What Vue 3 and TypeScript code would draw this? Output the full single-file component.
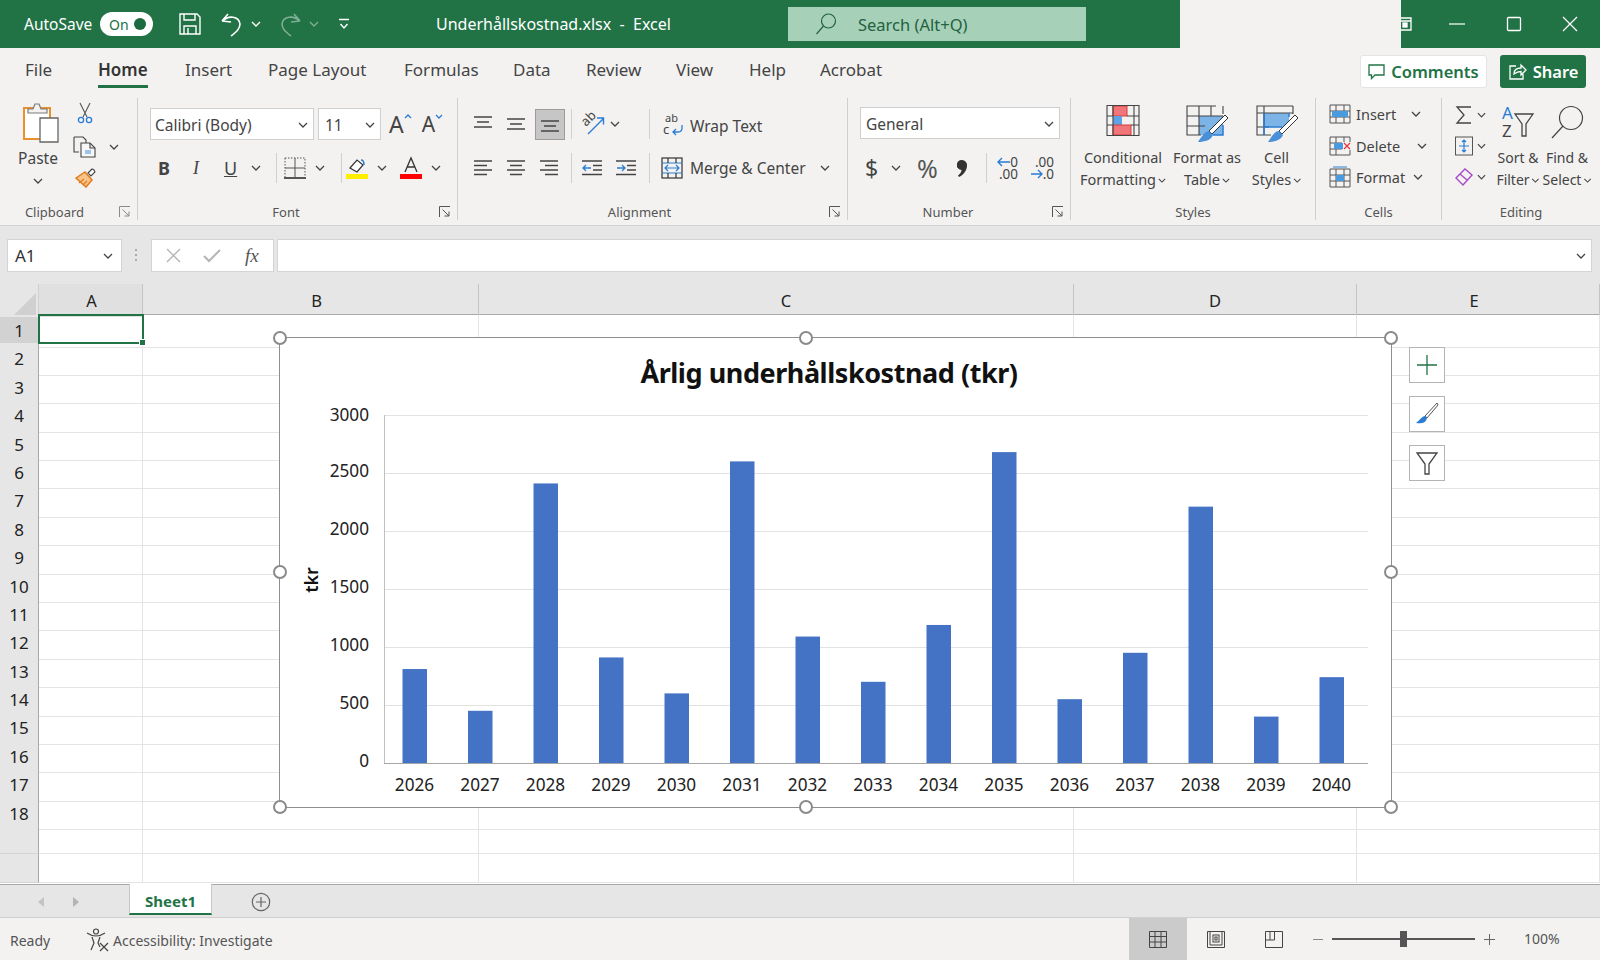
<script setup lang="ts">
const tabs = ['File', 'Home', 'Insert', 'Page Layout', 'Formulas', 'Data', 'Review', 'View', 'Help', 'Acrobat']
const columns = ['A', 'B', 'C', 'D', 'E']
const rows = Array.from({ length: 20 }, (_, i) => i + 1)

const values = [810, 450, 2410, 910, 600, 2600, 1090, 700, 1190, 2680, 550, 950, 2210, 400, 740]
const ticks = [3000, 2500, 2000, 1500, 1000, 500, 0]

const plotBottom = 425
const pxPerUnit = 348 / 3000
const yFor = (v: number) => plotBottom - v * pxPerUnit
const xFor = (i: number) => 134.5 + i * 65.5

const handles = ['h-tl', 'h-tm', 'h-tr', 'h-ml', 'h-mr', 'h-bl', 'h-bm', 'h-br']
</script>

<template>
  <div class="app">
    <!-- title bar -->
    <header class="titlebar">
      <span class="autosave">AutoSave</span>
      <span class="toggle"><span>On</span><i></i></span>
      <svg class="tb-save" width="24" height="24" viewBox="0 0 24 24" fill="none" stroke="#fff" stroke-width="1.4">
        <path d="M2 2h17l3 3v17H2z" /><path d="M6 2v6h11V2M6 22v-8h12v8M10 16v6" />
      </svg>
      <svg class="tb-undo" width="24" height="26" viewBox="0 0 24 26" fill="none" stroke="#fff" stroke-width="1.6">
        <path d="M2 10l6-7M2 10l9 1M3 10c5-6 16-5 17 3 0 5-4 8-9 12" />
      </svg>
      <svg class="chev-w c1" width="10" height="6" viewBox="0 0 10 6" fill="none" stroke="#fff" stroke-width="1.4"><path d="M1 1l4 4 4-4" /></svg>
      <svg class="tb-redo" width="24" height="26" viewBox="0 0 24 26" fill="none" stroke="#7fae94" stroke-width="1.6">
        <path d="M22 10l-6-7M22 10l-9 1M21 10c-5-6-16-5-17 3 0 5 4 8 9 12" />
      </svg>
      <svg class="chev-w c2" width="10" height="6" viewBox="0 0 10 6" fill="none" stroke="#7fae94" stroke-width="1.4"><path d="M1 1l4 4 4-4" /></svg>
      <svg class="tb-more" width="12" height="12" viewBox="0 0 12 12" fill="none" stroke="#fff" stroke-width="1.4"><path d="M1 1.5h10M2.5 6l3.5 4 3.5-4" /></svg>
      <span class="doc-title">Underhållskostnad.xlsx&nbsp; -&nbsp; Excel</span>
      <div class="search">
        <svg width="24" height="24" viewBox="0 0 24 24" fill="none" stroke="#24613f" stroke-width="1.2"><circle cx="14.5" cy="9" r="7" /><path d="M9.5 14L2.5 22" /></svg>
        <span>Search (Alt+Q)</span>
      </div>
      <div class="win-btns">
        <svg width="12" height="14" viewBox="0 0 12 14" fill="none" stroke="#fff" stroke-width="1.3" class="win-restore"><path d="M0 1h11v12H0M0 4h11" /><rect x="3" y="6" width="4" height="4" fill="#fff" /></svg>
        <svg width="16" height="16" viewBox="0 0 16 16" stroke="#fff" stroke-width="1.2"><path d="M0 8h16" /></svg>
        <svg width="16" height="16" viewBox="0 0 16 16" fill="none" stroke="#fff" stroke-width="1.3"><rect x="1.5" y="1.5" width="13" height="13" rx="1" /></svg>
        <svg width="16" height="16" viewBox="0 0 16 16" stroke="#fff" stroke-width="1.3"><path d="M1 1l14 14M15 1L1 15" /></svg>
      </div>
    </header>
    <div class="title-patch"></div>

    <!-- ribbon -->
    <section class="ribbon">
      <div class="tabs">
        <span v-for="t in tabs" :key="t" class="tab" :class="[{ active: t === 'Home' }, 'tab-' + t.split(' ')[0].toLowerCase()]">{{ t }}</span>
        <div class="tab-actions">
          <button class="comments">
            <svg width="17" height="17" viewBox="0 0 17 17" fill="none" stroke="#217346" stroke-width="1.3"><path d="M1 2h15v10H7l-3.5 3.5V12H1z" /></svg>
            Comments
          </button>
          <button class="share">
            <svg width="19" height="19" viewBox="0 0 19 19" fill="none" stroke="#fff" stroke-width="1.3"><path d="M8 4H2v13h13v-5M6 12c0-4 3-6 7-6V3l5 5-5 5V9.5c-3 0-5 1-7 2.5z" /></svg>
            Share
          </button>
        </div>
      </div>

      <div class="groups">
        <!-- Clipboard -->
        <div class="group g-clip">
          <div class="body">
            <div class="paste">
              <svg width="36" height="40" viewBox="0 0 36 40" fill="none">
                <path d="M17 36H1V5h26v10" fill="#fff" stroke="#e8912d" stroke-width="2" />
                <path d="M5 10V6h5l2-5h4l2 5h6v4z" fill="#f3f2f1" stroke="#7a7a7a" stroke-width="1.2" />
                <path d="M17 15h18v24H17z" fill="#fff" stroke="#666" stroke-width="1.3" />
              </svg>
              <span>Paste</span>
              <svg class="chev" width="10" height="6" viewBox="0 0 10 6"><path d="M1 1l4 4 4-4" /></svg>
            </div>
            <div class="clip-tools">
              <svg class="t-cut" width="16" height="22" viewBox="0 0 16 22" fill="none" stroke="#555" stroke-width="1.1">
                <path d="M3 1l7 14M13 1L6 15" /><circle cx="4" cy="18" r="2.6" stroke="#2b7cd3" stroke-width="1.3" /><circle cx="12" cy="18" r="2.6" stroke="#2b7cd3" stroke-width="1.3" />
              </svg>
              <div class="copy-row">
                <svg width="24" height="22" viewBox="0 0 24 22" fill="none" stroke="#444" stroke-width="1.1">
                  <path d="M1 1h9l3 3v3M1 1v15h5" /><path d="M8 7h9l5 5v9H8z" fill="#f7f7f7" /><path d="M17 7v5h5" /><rect x="12" y="14" width="6" height="4" fill="#9cc3e8" stroke="none" />
                </svg>
                <svg class="chev" width="10" height="6" viewBox="0 0 10 6"><path d="M1 1l4 4 4-4" /></svg>
              </div>
              <svg class="t-paint" width="24" height="22" viewBox="0 0 24 22" fill="none">
                <path d="M2 12l9-6 7 8-6 7z" fill="#f8c489" stroke="#e07b1f" stroke-width="1.5" />
                <path d="M14 7l4-4 2 1 1 2-4 4z" fill="#fff" stroke="#444" stroke-width="1.1" />
                <path d="M5 17l5-4M9 19l4-4" stroke="#e07b1f" stroke-width="1.2" />
              </svg>
            </div>
          </div>
          <div class="label">Clipboard
            <svg class="launch" width="12" height="12" viewBox="0 0 12 12" fill="none" stroke="#8a8a8a"><path d="M.5 11V.5H11M3.5 3.5L10 10M10 5.5V10H5.5" /></svg>
          </div>
        </div>

        <!-- Font -->
        <div class="group g-font">
          <div class="body col">
            <div class="rb-row">
              <div class="select s-font">Calibri (Body)<svg class="chev" width="10" height="6" viewBox="0 0 10 6"><path d="M1 1l4 4 4-4" /></svg></div>
              <div class="select s-size">11<svg class="chev" width="10" height="6" viewBox="0 0 10 6"><path d="M1 1l4 4 4-4" /></svg></div>
              <span class="big-a grow">A<svg width="8" height="5" viewBox="0 0 8 5" fill="none" stroke="#2b7cd3" stroke-width="1.3"><path d="M1 4l3-3 3 3" /></svg></span>
              <span class="big-a shrink">A<svg width="8" height="5" viewBox="0 0 8 5" fill="none" stroke="#2b7cd3" stroke-width="1.3"><path d="M1 1l3 3 3-3" /></svg></span>
            </div>
            <div class="rb-row r-fmt">
              <b class="f-b">B</b>
              <i class="f-i">I</i>
              <u class="f-u">U</u>
              <svg class="chev f-c1" width="10" height="6" viewBox="0 0 10 6"><path d="M1 1l4 4 4-4" /></svg>
              <span class="vsep vs1"></span>
              <svg class="f-border" width="22" height="22" viewBox="0 0 22 22" fill="none" stroke="#555"><path d="M1 1h20v19M1 1v19" stroke-dasharray="1.5 1.5" /><path d="M11 1v19M1 11h20" stroke="#555" /><path d="M0 21h22" stroke="#222" stroke-width="1.5" /></svg>
              <svg class="chev f-c2" width="10" height="6" viewBox="0 0 10 6"><path d="M1 1l4 4 4-4" /></svg>
              <span class="vsep vs2"></span>
              <svg class="f-fill" width="24" height="24" viewBox="0 0 24 24" fill="none">
                <path d="M5 12l7-8 6 5-6 7z" fill="#fff" stroke="#333" stroke-width="1.2" />
                <path d="M16 4c2 0 3 2 3 5" stroke="#2b7cd3" stroke-width="1.5" />
                <rect x="1" y="18" width="22" height="5" fill="#ffee00" />
              </svg>
              <svg class="chev f-c3" width="10" height="6" viewBox="0 0 10 6"><path d="M1 1l4 4 4-4" /></svg>
              <svg class="f-color" width="24" height="24" viewBox="0 0 24 24" fill="none">
                <path d="M6 16L12 2l6 14M8 11h8" stroke="#333" stroke-width="1.3" />
                <rect x="1" y="18" width="22" height="5" fill="#f00" />
              </svg>
              <svg class="chev f-c4" width="10" height="6" viewBox="0 0 10 6"><path d="M1 1l4 4 4-4" /></svg>
            </div>
          </div>
          <div class="label">Font
            <svg class="launch" width="12" height="12" viewBox="0 0 12 12" fill="none" stroke="#555"><path d="M.5 11V.5H11M3.5 3.5L10 10M10 5.5V10H5.5" /></svg>
          </div>
        </div>

        <!-- Alignment -->
        <div class="group g-align">
          <div class="body col">
            <div class="rb-row r-al1">
              <svg class="a1-1" width="20" height="18" viewBox="0 0 20 18" stroke="#444" stroke-width="1.3"><path d="M1 2h18M4 7h12M1 12h18" /></svg>
              <svg class="a1-2" width="20" height="18" viewBox="0 0 20 18" stroke="#444" stroke-width="1.3"><path d="M1 4h18M4 9h12M1 14h18" /></svg>
              <span class="al-on"><svg width="20" height="18" viewBox="0 0 20 18" stroke="#444" stroke-width="1.3"><path d="M1 6h18M4 11h12M1 16h18" /></svg></span>
              <span class="vsep a1-s1"></span>
              <svg class="orient ic-open" width="22" height="24" viewBox="0 0 22 24" fill="none">
                <text transform="translate(3 15) rotate(-45)" class="ic-text">ab</text>
                <path d="M5 22L20 7M14 6h6.500v6.500" stroke="#2b7cd3" stroke-width="1.4" />
              </svg>
              <svg class="chev a1-c" width="10" height="6" viewBox="0 0 10 6"><path d="M1 1l4 4 4-4" /></svg>
              <span class="vsep a1-s2"></span>
              <svg class="wrap-ic ic-open" width="22" height="24" viewBox="0 0 22 24" fill="none">
                <text x="3" y="10" class="ic-text small">ab</text>
                <text x="1" y="22" class="ic-text">c</text>
                <path d="M20 13v3c0 3-2 4-4 4h-5M14 17l-3 3 3 3" stroke="#2b7cd3" stroke-width="1.3" />
              </svg>
              <span class="al-text t-wrap">Wrap Text</span>
            </div>
            <div class="rb-row r-al2">
              <svg class="a2-1" width="20" height="18" viewBox="0 0 20 18" stroke="#444" stroke-width="1.3"><path d="M1 2h18M1 6.5h13M1 11h18M1 15.5h13" /></svg>
              <svg class="a2-2" width="20" height="18" viewBox="0 0 20 18" stroke="#444" stroke-width="1.3"><path d="M1 2h18M4 6.5h12M1 11h18M4 15.5h12" /></svg>
              <svg class="a2-2" width="20" height="18" viewBox="0 0 20 18" stroke="#444" stroke-width="1.3"><path d="M1 2h18M6 6.5h13M1 11h18M6 15.5h13" /></svg>
              <span class="vsep a2-s1"></span>
              <svg class="a2-i1" width="20" height="18" viewBox="0 0 20 18" fill="none" stroke="#444" stroke-width="1.3"><path d="M0 2h20M11 6.5h9M11 11h9M0 15.5h20" /><path d="M1 9h8M4 6L1 9l3 3" stroke="#2b7cd3" /></svg>
              <svg class="a2-i2" width="20" height="18" viewBox="0 0 20 18" fill="none" stroke="#444" stroke-width="1.3"><path d="M0 2h20M11 6.5h9M11 11h9M0 15.5h20" /><path d="M1 9h8M6 6l3 3-3 3" stroke="#2b7cd3" /></svg>
              <span class="vsep a2-s2"></span>
              <svg class="merge-ic" width="22" height="22" viewBox="0 0 22 22" fill="none" stroke-width="1.2">
                <rect x="1" y="1" width="20" height="20" stroke="#333" />
                <path d="M1 6h20M1 16h20" stroke="#2b7cd3" />
                <path d="M7 1v5M15 1v5M7 16v5M15 16v5" stroke="#333" />
                <path d="M4 11h14M7 8l-3 3 3 3M15 8l3 3-3 3" stroke="#2b7cd3" />
              </svg>
              <span class="al-text t-merge">Merge &amp; Center</span>
              <svg class="chev m-chev" width="10" height="6" viewBox="0 0 10 6"><path d="M1 1l4 4 4-4" /></svg>
            </div>
          </div>
          <div class="label">Alignment
            <svg class="launch" width="12" height="12" viewBox="0 0 12 12" fill="none" stroke="#555"><path d="M.5 11V.5H11M3.5 3.5L10 10M10 5.5V10H5.5" /></svg>
          </div>
        </div>

        <!-- Number -->
        <div class="group g-num">
          <div class="body col">
            <div class="rb-row"><div class="select s-num">General<svg class="chev" width="10" height="6" viewBox="0 0 10 6"><path d="M1 1l4 4 4-4" /></svg></div></div>
            <div class="rb-row r-num">
              <span class="n-d">$</span>
              <svg class="chev n-c" width="10" height="6" viewBox="0 0 10 6"><path d="M1 1l4 4 4-4" /></svg>
              <span class="n-p">%</span>
              <svg class="n-k" width="10" height="17" viewBox="0 0 10 17" fill="#333"><path d="M5 0a5 5 0 0 1 5 5.5C10 11 6 15 2 17l-1-1.5c2-1.500 3.500-3.500 3.500-5.500A5 5 0 0 1 5 0z" /></svg>
              <span class="vsep n-s"></span>
              <div class="dec d-less">
                <div><svg width="13" height="10" viewBox="0 0 13 10" fill="none" stroke="#2b7cd3" stroke-width="1.4"><path d="M13 5H1M5 1L1 5l4 4" /></svg><span>0</span></div>
                <div><span>.00</span></div>
              </div>
              <div class="dec d-more">
                <div><span>.00</span></div>
                <div><svg width="12" height="10" viewBox="0 0 12 10" fill="none" stroke="#2b7cd3" stroke-width="1.4"><path d="M0 5h11M7 1l4 4-4 4" /></svg><span>.0</span></div>
              </div>
            </div>
          </div>
          <div class="label">Number
            <svg class="launch" width="12" height="12" viewBox="0 0 12 12" fill="none" stroke="#555"><path d="M.5 11V.5H11M3.5 3.5L10 10M10 5.5V10H5.5" /></svg>
          </div>
        </div>

        <!-- Styles -->
        <div class="group g-styles">
          <div class="body styles">
            <div class="big b-cond">
              <svg width="34" height="31" viewBox="0 0 34 31" fill="none">
                <rect x="7" y="1" width="14" height="10" fill="#f0767a" stroke="#d83b3b" />
                <rect x="7" y="11" width="9" height="9" fill="#5ea4e4" />
                <rect x="7" y="20" width="18" height="10" fill="#f0767a" stroke="#d83b3b" />
                <path d="M1 .5h32v30H1zM1 11h6M21 11h12M1 20h6M25 20h8M7 .5v30M28 .5v30" stroke="#444" stroke-width="1.1" />
              </svg>
              <span>Conditional<br />Formatting<svg class="chev" width="8" height="5" viewBox="0 0 10 6"><path d="M1 1l4 4 4-4" /></svg></span>
            </div>
            <div class="big b-table">
              <svg width="42" height="38" viewBox="0 0 42 38" fill="none">
                <rect x="13" y="11" width="24" height="19" fill="#7db4e8" />
                <path d="M27 30h10V20" stroke="#2b7cd3" stroke-width="1.5" />
                <path d="M30 1H1v29h14M1 11h36M1 21h18M13 1v29M25 1v10M37 1v8" stroke="#444" stroke-width="1.1" />
                <path d="M39 10L23 26l3 3L42 13z" fill="#fff" stroke="#333" />
                <path d="M23 26c-4 0-7 5-11 11 7 0 13-2 15-7z" fill="#4a90d9" />
              </svg>
              <span>Format as<br />Table<svg class="chev" width="8" height="5" viewBox="0 0 10 6"><path d="M1 1l4 4 4-4" /></svg></span>
            </div>
            <div class="big b-cell">
              <svg width="42" height="38" viewBox="0 0 42 38" fill="none">
                <rect x="8" y="8" width="25" height="14" fill="#7db4e8" />
                <path d="M37 1H1v29h14M1 8h36M1 22h12M8 1v29M37 1v8" stroke="#444" stroke-width="1.1" />
                <path d="M8 8v22M8 22h18M33 8v4" stroke="#2b7cd3" stroke-width="1.5" />
                <path d="M39 10L23 26l3 3L42 13z" fill="#fff" stroke="#333" />
                <path d="M23 26c-4 0-7 5-11 11 7 0 13-2 15-7z" fill="#4a90d9" />
              </svg>
              <span>Cell<br />Styles<svg class="chev" width="8" height="5" viewBox="0 0 10 6"><path d="M1 1l4 4 4-4" /></svg></span>
            </div>
          </div>
          <div class="label">Styles</div>
        </div>

        <!-- Cells -->
        <div class="group g-cells">
          <div class="body col cells">
            <div class="cell-row">
              <svg width="22" height="20" viewBox="0 0 22 20" fill="none"><path d="M1 1h20v18H1zM1 7h20M1 13h20M7 1v18M15 1v18" stroke="#555" /><rect x="3" y="7" width="16" height="6" fill="#4a9ae0" /></svg>
              <span>Insert</span><svg class="chev" width="10" height="6" viewBox="0 0 10 6"><path d="M1 1l4 4 4-4" /></svg>
            </div>
            <div class="cell-row">
              <svg width="22" height="20" viewBox="0 0 22 20" fill="none"><path d="M1 1h20v5M1 1v18h20v-5M1 7h12M1 13h12M7 1v18M15 1v5" stroke="#555" /><rect x="5" y="7" width="9" height="6" fill="#4a9ae0" /><path d="M15 7l6 6M21 7l-6 6" stroke="#e8333b" stroke-width="1.2" /></svg>
              <span>Delete</span><svg class="chev d-c" width="10" height="6" viewBox="0 0 10 6"><path d="M1 1l4 4 4-4" /></svg>
            </div>
            <div class="cell-row">
              <svg width="22" height="22" viewBox="0 0 22 22" fill="none"><path d="M1 3h20v18H1zM1 9h20M1 15h20M7 3v18M15 3v18" stroke="#555" /><rect x="7" y="9" width="8" height="6" fill="#4a9ae0" /><path d="M4 1h14" stroke="#2b7cd3" /></svg>
              <span>Format</span><svg class="chev f-cc" width="10" height="6" viewBox="0 0 10 6"><path d="M1 1l4 4 4-4" /></svg>
            </div>
          </div>
          <div class="label">Cells</div>
        </div>

        <!-- Editing -->
        <div class="group g-edit">
          <div class="body edit">
            <div class="edit-tools">
              <div class="et-row">
                <svg width="18" height="20" viewBox="0 0 18 20" fill="none" stroke="#444" stroke-width="1.3"><path d="M16 2H2l7 8-7 8h14" /></svg>
                <svg class="chev" width="9" height="6" viewBox="0 0 10 6"><path d="M1 1l4 4 4-4" /></svg>
              </div>
              <div class="et-row">
                <svg width="18" height="20" viewBox="0 0 18 20" fill="none"><rect x=".5" y="1" width="17" height="18" stroke="#555" /><path d="M9 4v12M4 10h10M7 6l2-2 2 2M7 14l2 2 2-2" stroke="#2b7cd3" stroke-width="1.2" /></svg>
                <svg class="chev" width="9" height="6" viewBox="0 0 10 6"><path d="M1 1l4 4 4-4" /></svg>
              </div>
              <div class="et-row">
                <svg width="18" height="20" viewBox="0 0 18 20" fill="none" stroke="#a64bc7" stroke-width="1.4"><path d="M1 11l9-9 7 6-9 10z" /><path d="M5 7l7 6" /></svg>
                <svg class="chev" width="9" height="6" viewBox="0 0 10 6"><path d="M1 1l4 4 4-4" /></svg>
              </div>
            </div>
            <div class="big b-sort">
              <svg class="ic-open" width="34" height="34" viewBox="0 0 34 34" fill="none">
                <text x="1" y="14" class="az a-blue">A</text>
                <text x="1" y="32" class="az">Z</text>
                <path d="M14 9h18l-7 10v12h-4V19z" stroke="#444" stroke-width="1.3" />
              </svg>
              <span>Sort &amp;<br />Filter<svg class="chev" width="8" height="5" viewBox="0 0 10 6"><path d="M1 1l4 4 4-4" /></svg></span>
            </div>
            <div class="big b-find">
              <svg width="34" height="34" viewBox="0 0 34 34" fill="none" stroke="#444" stroke-width="1.2"><circle cx="21" cy="13" r="11.5" /><path d="M13 21L2 33" /></svg>
              <span>Find &amp;<br />Select<svg class="chev" width="8" height="5" viewBox="0 0 10 6"><path d="M1 1l4 4 4-4" /></svg></span>
            </div>
          </div>
          <div class="label">Editing</div>
        </div>
      </div>
    </section>

    <!-- formula bar -->
    <div class="formula">
      <div class="namebox">A1<svg class="chev" width="10" height="6" viewBox="0 0 10 6"><path d="M1 1l4 4 4-4" /></svg></div>
      <span class="dots"></span>
      <div class="fx">
        <svg width="15" height="15" viewBox="0 0 15 15" stroke="#b5b5b5" stroke-width="1.4"><path d="M1 1l13 13M14 1L1 14" /></svg>
        <svg width="18" height="15" viewBox="0 0 18 15" fill="none" stroke="#b5b5b5" stroke-width="2"><path d="M1 8l5 5L17 2" /></svg>
        <em>fx</em>
      </div>
      <div class="finput"><svg class="chev" width="10" height="6" viewBox="0 0 10 6"><path d="M1 1l4 4 4-4" /></svg></div>
    </div>

    <!-- sheet -->
    <div class="sheet">
      <div class="col-head">
        <div class="corner"><i></i></div>
        <div v-for="c in columns" :key="c" class="ch" :class="['col-' + c, { sel: c === 'A' }]">{{ c }}</div>
      </div>
      <div v-for="r in rows" :key="r" class="row">
        <div class="rh" :class="{ sel: r === 1 }">{{ r <= 18 ? r : '' }}</div>
        <div v-for="c in columns" :key="c" class="cell"></div>
      </div>
      <div class="selected"><i></i></div>

      <div class="chart">
        <svg class="plot" width="1111" height="470" viewBox="0 0 1111 470">
          <text x="549" y="45" text-anchor="middle" class="c-title">Årlig underhållskostnad (tkr)</text>
          <g v-for="t in ticks" :key="t">
            <line x1="104" x2="1088" :y1="yFor(t) + 0.5" :y2="yFor(t) + 0.5" :stroke="t === 0 ? '#a6a6a6' : '#e2e2e2'" />
            <text x="89" :y="yFor(t) + (t === 3000 ? 6 : 4.3)" text-anchor="end" class="c-label">{{ t }}</text>
          </g>
          <line x1="104.5" x2="104.5" y1="77" y2="425" stroke="#c0c0c0" />
          <g v-for="(v, i) in values" :key="i">
            <rect :x="xFor(i) - 12" :y="yFor(v)" width="24.5" :height="v * pxPerUnit" fill="#4472c4" />
            <text :x="xFor(i)" y="453" text-anchor="middle" class="c-label">{{ 2026 + i }}</text>
          </g>
          <text transform="translate(38 242) rotate(-90)" text-anchor="middle" class="c-axis">tkr</text>
        </svg>
        <span v-for="h in handles" :key="h" class="handle" :class="h"></span>
      </div>

      <div class="side-btns">
        <button>
          <svg width="20" height="20" viewBox="0 0 20 20" stroke="#217346" stroke-width="1.3"><path d="M10 0v20M0 10h20" /></svg>
        </button>
        <button>
          <svg width="24" height="24" viewBox="0 0 24 24" fill="none">
            <path d="M22 1L10 14l2 2L23 3z" fill="#fff" stroke="#555" />
            <path d="M10 14c-3 0-5 4-9 7 5 1 10 0 11-5z" fill="#2b7cd3" />
          </svg>
        </button>
        <button>
          <svg width="24" height="24" viewBox="0 0 24 24" fill="none" stroke="#444" stroke-width="1.3"><path d="M2 2h20l-8 11v10h-4V13z" /></svg>
        </button>
      </div>
    </div>

    <!-- sheet tabs -->
    <div class="sheet-tabs">
      <svg class="arr arr-l" width="7" height="10" viewBox="0 0 7 10" fill="#c4c4c4"><path d="M6 0v10L0 5z" /></svg>
      <svg class="arr arr-r" width="7" height="10" viewBox="0 0 7 10" fill="#b4b4b4"><path d="M1 0v10l6-5z" /></svg>
      <div class="sheet-tab">Sheet1</div>
      <svg class="add" width="20" height="20" viewBox="0 0 20 20" fill="none" stroke="#666" stroke-width="1.2"><circle cx="10" cy="10" r="8.7" /><path d="M10 5v10M5 10h10" /></svg>
    </div>

    <!-- status bar -->
    <footer class="status">
      <span class="ready">Ready</span>
      <svg class="a11y" width="24" height="24" viewBox="0 0 24 24" fill="none" stroke="#444" stroke-width="1.2">
        <circle cx="10" cy="3.5" r="2.5" /><path d="M1 5c3 2 6 3 9 3s6-1 9-3M6 9l2 6-3 7M14 9l-2 6 2 4" /><path d="M14 15l8 8M22 15l-8 8" />
      </svg>
      <span class="a11y-text">Accessibility: Investigate</span>
      <div class="views">
        <span class="view on"><svg width="18" height="17" viewBox="0 0 18 17" fill="none" stroke="#444"><path d="M.5.5h17v16H.5zM.5 5.5h17M.5 11h17M6 .5v16M12 .5v16" /></svg></span>
        <span class="view"><svg width="18" height="17" viewBox="0 0 18 17" fill="none" stroke="#444"><path d="M.5.5h17v16H.5zM3 .5V14h12V.5" /><rect x="6" y="4" width="6" height="7" /><rect x="8" y="6" width="2" height="3" /></svg></span>
        <span class="view"><svg width="18" height="17" viewBox="0 0 18 17" fill="none" stroke="#444"><path d="M.5.5h17v16H.5zM.5 9h9V.5M5 .5V9" /></svg></span>
      </div>
      <div class="zoom">
        <span class="z-minus"></span>
        <div class="z-track"><i></i></div>
        <svg width="11" height="11" viewBox="0 0 11 11" stroke="#666"><path d="M5.5 0v11M0 5.5h11" /></svg>
      </div>
      <span class="pct">100%</span>
    </footer>
  </div>
</template>

<style>
html, body { margin: 0; background: #fff; }
</style>

<style scoped>
.app {
  position: relative;
  width: 1600px;
  height: 960px;
  overflow: hidden;
  display: flex;
  flex-direction: column;
  font-family: "Noto Sans", "Open Sans", sans-serif;
  color: #333;
  background: #f3f2f1;
}
svg { display: block; flex: none; }
.ic-open { overflow: visible; }
.chev { fill: none; stroke: #444; stroke-width: 1.3; flex: none; }
.ic-text { font: 13px "Noto Sans", sans-serif; fill: #444; }
.ic-text.small { font-size: 11px; }

/* title bar */
.titlebar {
  height: 48px;
  flex: none;
  background: #217346;
  display: flex;
  align-items: center;
  color: #fff;
  padding-left: 24px;
  font-size: 15.5px;
}
.autosave { width: 76px; }
.toggle {
  width: 53px;
  height: 24px;
  border-radius: 12px;
  background: #fff;
  color: #217346;
  display: flex;
  align-items: center;
  justify-content: space-between;
  padding: 0 7px 0 9px;
  box-sizing: border-box;
  font-size: 14px;
}
.toggle i { width: 12px; height: 12px; border-radius: 50%; background: #1c6b3f; }
.tb-save { margin-left: 25px; }
.tb-undo { margin-left: 18px; }
.c1 { margin-left: 7px; }
.tb-redo { margin-left: 17px; }
.c2 { margin-left: 7px; }
.tb-more { margin-left: 19px; }
.doc-title { margin-left: 86px; width: 352px; font-size: 16px; white-space: nowrap; }
.search {
  width: 298px;
  height: 34px;
  background: #a6d1b8;
  display: flex;
  align-items: center;
  padding-left: 26px;
  box-sizing: border-box;
  color: #24613f;
  font-size: 16.5px;
  gap: 20px;
}
.win-btns { margin-left: auto; display: flex; align-items: center; gap: 40.5px; padding-right: 22px; }
.win-restore { margin-right: -3px; }
.title-patch {
  position: absolute;
  left: 1180px;
  top: 0;
  width: 221px;
  height: 56px;
  background: #f3f2f1;
}

/* ribbon */
.ribbon { flex: none; background: #f3f2f1; border-bottom: 1px solid #d2d2d2; height: 178px; box-sizing: border-box; }
.tabs { height: 50px; display: flex; position: relative; font-size: 17px; color: #444; }
.tab { position: absolute; top: 10px; line-height: 24px; white-space: nowrap; }
.tab-file { left: 25px; }
.tab-home { left: 98px; }
.tab-insert { left: 185px; }
.tab-page { left: 268px; }
.tab-formulas { left: 404px; }
.tab-data { left: 513px; }
.tab-review { left: 586px; }
.tab-view { left: 676px; }
.tab-help { left: 749px; }
.tab-acrobat { left: 820px; }
.tab.active { font-weight: 600; color: #333; }
.tab.active::after { content: ""; position: absolute; left: 0; right: 0; top: 27px; height: 3px; background: #217346; }
.tab-actions { position: absolute; top: 7px; left: 1360px; display: flex; gap: 13px; }
.comments, .share {
  font: 600 16.5px "Noto Sans", sans-serif;
  display: flex;
  align-items: center;
  justify-content: center;
  gap: 6px;
  height: 33px;
  border-radius: 3px;
  padding: 0;
}
.comments { width: 127px; background: #fff; color: #217346; border: 1px solid #e4e4e4; }
.share { width: 86px; background: #217346; color: #fff; border: 0; }

.groups { display: flex; height: 122px; }
.group { position: relative; display: flex; flex-direction: column; box-sizing: border-box; border-right: 1px solid #cfcfcf; }
.group:last-child { border-right: 0; }
.g-clip { width: 138px; }
.g-font { width: 320px; }
.g-align { width: 390px; }
.g-num { width: 223px; }
.g-styles { width: 245px; }
.g-cells { width: 126px; }
.g-edit { width: 158px; }
.body { flex: 1; display: flex; min-height: 0; }
.col { flex-direction: column; }
.label { height: 20px; line-height: 24px; text-align: center; font-size: 13px; color: #555; position: relative; flex: none; }
.g-clip .label { padding-right: 28px; }
.g-font .label { padding-right: 23px; }
.g-align .label { padding-right: 26px; }
.g-num .label { padding-right: 22px; }
.launch { position: absolute; right: 6px; top: 6px; }

.rb-row { display: flex; align-items: center; height: 32px; margin-top: 10px; }
.rb-row + .rb-row { margin-top: 12px; }

.select {
  height: 32px;
  box-sizing: border-box;
  background: #fff;
  border: 1px solid #cfcfcf;
  display: flex;
  align-items: center;
  justify-content: space-between;
  padding: 1px 5px 0 4px;
  font-size: 15.5px;
  color: #444;
}

/* clipboard */
.paste { width: 44px; margin: 5px 0 0 16px; display: flex; flex-direction: column; align-items: center; font-size: 15.5px; color: #444; }
.paste > svg:first-child { margin-left: 6px; }
.paste span { margin-top: 2px; line-height: 26px; }
.paste .chev { margin-top: 7px; }
.clip-tools { margin-left: 13px; padding-top: 4px; display: flex; flex-direction: column; align-items: flex-start; }
.t-cut { margin-left: 4px; }
.copy-row { display: flex; align-items: center; gap: 12px; margin-top: 12px; }
.t-paint { margin-left: 1px; margin-top: 8px; }

/* font */
.s-font { width: 164px; margin-left: 12px; }
.s-size { width: 63px; margin-left: 4px; padding-left: 6px; }
.big-a { font-size: 23px; line-height: 24px; color: #444; display: flex; align-items: flex-start; }
.big-a svg { margin-top: 2px; }
.grow { margin-left: 8px; }
.shrink { margin-left: 10px; font-size: 21px; }
.r-fmt { font-size: 18px; color: #444; position: relative; }
.r-fmt > * { position: absolute; }
.f-b { left: 20px; }
.f-i { left: 55px; font-family: "Liberation Serif", serif; }
.f-u { left: 86px; }
.f-c1 { left: 113px; }
.vs1 { left: 138px; }
.f-border { left: 146px; }
.f-c2 { left: 177px; }
.vs2 { left: 203px; }
.f-fill { left: 207px; }
.f-c3 { left: 239px; }
.f-color { left: 261px; }
.f-c4 { left: 293px; }
.vsep { width: 1px; height: 30px; background: #d0d0d0; flex: none; }

/* alignment */
.a1-1 { margin-left: 15px; }
.a1-2 { margin-left: 13px; }
.al-on {
  width: 30px;
  height: 31px;
  margin-left: 9px;
  background: #c6c6c6;
  border: 1px solid #9c9c9c;
  box-sizing: border-box;
  display: flex;
  align-items: center;
  justify-content: center;
}
.a1-s1 { margin-left: 6px; }
.orient { margin-left: 11px; }
.a1-c { margin-left: 5px; }
.a1-s2 { margin-left: 29px; }
.wrap-ic { margin-left: 12px; }
.al-text { font-size: 15.5px; color: #444; white-space: nowrap; }
.t-wrap { margin-left: 6px; margin-top: 3px; }
.a2-1 { margin-left: 15px; }
.a2-2 { margin-left: 13px; }
.a2-s1 { margin-left: 12px; }
.a2-i1 { margin-left: 10px; }
.a2-i2 { margin-left: 13.5px; }
.a2-s2 { margin-left: 13.5px; }
.merge-ic { margin-left: 10.5px; }
.t-merge { margin-left: 7.5px; }
.m-chev { margin-left: 14.5px; }

/* number */
.s-num { width: 200px; margin-left: 12px; padding: 2px 5px 0 5px; }
.g-num .rb-row:first-child { margin-top: 9px; }
.g-num .rb-row + .rb-row { margin-top: 13px; position: relative; color: #444; }
.r-num > * { position: absolute; }
.n-d { left: 17px; font-size: 23px; }
.n-c { left: 43px; }
.n-p { left: 69px; font-size: 25px; color: #555; }
.n-k { left: 109px; }
.n-s { left: 138px; }
.dec { width: 24px; font-size: 13.5px; line-height: 12px; color: #444; }
.dec > div { display: flex; justify-content: flex-end; align-items: center; height: 12px; }
.d-less { left: 146px; }
.d-more { left: 182px; }

/* styles */
.big { display: flex; flex-direction: column; align-items: center; font-size: 14.5px; line-height: 21.5px; color: #444; text-align: center; white-space: nowrap; }
.big svg.chev { display: inline-block; margin-left: 2px; vertical-align: 2px; }
.styles { position: relative; }
.big { position: absolute; top: 7px; }
.big > span { position: absolute; top: 42px; left: 50%; transform: translateX(-50%); }
.b-cond { left: 52px; width: 0; }
.b-table { left: 136px; width: 0; }
.b-cell { left: 205.5px; width: 0; }

/* cells */
.cells { padding: 4px 0 0 13px; gap: 7.5px; }
.cell-row { display: flex; align-items: center; height: 24px; font-size: 14.5px; color: #444; }
.cell-row span { margin-left: 5px; width: 55px; }
.d-c { margin-left: 6px; }
.f-cc { margin-left: 2px; }

/* editing */
.edit { position: relative; }
.edit-tools { position: absolute; left: 13px; top: 7px; display: flex; flex-direction: column; gap: 11px; }
.et-row { display: flex; align-items: center; gap: 4px; }
.b-sort { left: 76px; width: 0; }
.b-find { left: 125px; width: 0; }
.b-sort > span, .b-find > span { font-size: 14px; }
.az { font: 17px "Noto Sans", sans-serif; fill: #444; }
.a-blue { fill: #2b7cd3; }

/* formula bar */
.formula {
  height: 58px;
  flex: none;
  background: #e6e6e6;
  display: flex;
  align-items: flex-start;
  padding-top: 13px;
  box-sizing: border-box;
}
.namebox, .fx, .finput {
  height: 33px;
  background: #fff;
  border: 1px solid #d4d4d4;
  box-sizing: border-box;
  display: flex;
  align-items: center;
}
.namebox { width: 115px; margin-left: 7px; justify-content: space-between; padding: 0 8px 0 7px; font-size: 17px; }
.dots { width: 2px; height: 12px; margin: 10px 14px 0 13px; background: repeating-linear-gradient(#aaa 0 2px, transparent 2px 5px); }
.fx { width: 123px; gap: 22px; padding-left: 14px; }
.fx em { font: italic 19px "Liberation Serif", serif; color: #555; margin-left: 2px; }
.finput { flex: none; width: 1315px; margin-left: 3px; justify-content: flex-end; padding-right: 5px; }

/* sheet */
.sheet { position: relative; flex: 1; min-height: 0; background: #fff; overflow: hidden; }
.col-head, .row { display: grid; grid-template-columns: 39px 104px 336px 595px 283px 1fr; }
.col-head { height: 31px; background: #e6e6e6; border-bottom: 1px solid #a8a8a8; box-sizing: border-box; }
.corner { position: relative; background: #e6e6e6; border-right: 1px solid #d0d0d0; }
.corner i { position: absolute; right: 2px; bottom: 2px; border-style: solid; border-width: 0 0 22px 22px; border-color: transparent transparent #d0d0d0 transparent; }
.ch { text-align: center; font-size: 16.5px; line-height: 33px; color: #222; border-right: 1px solid #c4c4c4; box-sizing: border-box; }
.ch.sel { background: #e0e0e0; }
.col-A { padding-left: 2px; }
.col-B { padding-left: 12px; }
.col-C { padding-left: 20px; }
.col-E { padding-right: 8px; }
.row { height: 28.4px; }
.rh { background: #e6e6e6; border-right: 1px solid #a8a8a8; border-bottom: 1px solid #d4d4d4; box-sizing: border-box; text-align: center; font-size: 17px; line-height: 31.5px; color: #222; }
.rh.sel { background: #d2d2d2; }
.cell { border-right: 1px solid #e4e4e4; border-bottom: 1px solid #e4e4e4; box-sizing: border-box; }
.selected { position: absolute; left: 38px; top: 30px; width: 106px; height: 30px; border: 2px solid #217346; box-sizing: border-box; }
.selected i { position: absolute; right: -4px; bottom: -4px; width: 5px; height: 5px; background: #217346; border: 1px solid #fff; }

.chart { position: absolute; left: 279px; top: 53px; width: 1113px; height: 471px; box-sizing: border-box; border: 1px solid #8e8e8e; background: #fff; }
.plot { position: absolute; left: 0; top: 0; }
.c-title { font: 700 27px "Noto Sans", sans-serif; letter-spacing: -0.45px; fill: #111; }
.c-label { font: 17.2px "Noto Sans", sans-serif; fill: #222; }
.c-axis { font: 600 18px "Noto Sans", sans-serif; fill: #111; }
.handle { position: absolute; width: 10px; height: 10px; border: 2px solid #8a8a8a; border-radius: 50%; background: #fff; box-sizing: content-box; }
.h-tl, .h-tm, .h-tr { top: -7px; }
.h-bl, .h-bm, .h-br { bottom: -7px; }
.h-ml, .h-mr { top: 226.5px; }
.h-tl, .h-ml, .h-bl { left: -7px; }
.h-tr, .h-mr, .h-br { right: -7px; }
.h-tm, .h-bm { left: 518.5px; }

.side-btns { position: absolute; left: 1409px; top: 63px; display: flex; flex-direction: column; gap: 13px; }
.side-btns button { width: 36px; height: 36px; padding: 0; background: #fff; border: 1px solid #b4b4b4; display: flex; align-items: center; justify-content: center; }

/* sheet tabs */
.sheet-tabs { height: 34px; flex: none; background: #e6e6e6; border-top: 1px solid #a8a8a8; border-bottom: 1px solid #cfcfcf; box-sizing: border-box; position: relative; }
.arr { position: absolute; top: 12px; }
.arr-l { left: 38px; }
.arr-r { left: 72px; }
.sheet-tab {
  position: absolute;
  left: 129px;
  top: -1px;
  width: 83px;
  height: 31px;
  background: #fff;
  border-bottom: 2px solid #217346;
  border-left: 1px solid #c8c8c8;
  border-right: 1px solid #c8c8c8;
  box-sizing: border-box;
  text-align: center;
  font-weight: 700;
  font-size: 15px;
  line-height: 34px;
  color: #217346;
}
.add { position: absolute; left: 251px; top: 7px; }

/* status bar */
.status { height: 42px; flex: none; background: #f3f2f1; position: relative; display: flex; align-items: center; font-size: 14px; color: #555; padding-top: 2px; box-sizing: border-box; }
.ready { margin-left: 10px; width: 76px; }
.a11y { margin-right: 3px; }
.a11y-text { white-space: nowrap; }
.views { position: absolute; left: 1129px; top: 0; height: 42px; display: flex; }
.view { width: 58px; height: 42px; display: flex; align-items: center; justify-content: center; }
.view.on { background: #cbcbcb; }
.zoom { position: absolute; left: 1313px; top: 0; height: 42px; display: flex; align-items: center; }
.z-minus { width: 10px; height: 1px; background: #888; }
.z-track { position: relative; width: 143px; height: 2px; background: #555; margin: 0 9px; }
.z-track i { position: absolute; left: 68px; top: -7px; width: 7px; height: 16px; background: #555; }
.pct { position: absolute; left: 1524px; top: 11px; }
</style>
